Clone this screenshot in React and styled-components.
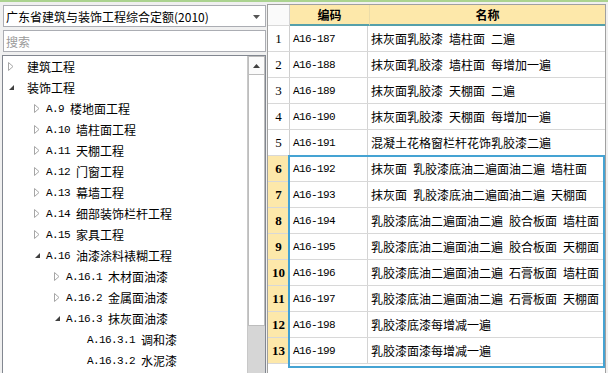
import React from 'react';
import styled, { createGlobalStyle } from 'styled-components';

const GlobalStyle = createGlobalStyle`
	html, body {
		margin: 0;
		padding: 0;
		background: #f0f0f0;
		overflow: hidden;
	}
	body {
		font-family: 'Noto Sans CJK SC', 'Noto Sans', sans-serif;
		font-size: 12px;
		color: #000;
	}
`;

const treeNodes = [
	{ level: 0, state: 'closed', label: '建筑工程' },
	{ level: 0, state: 'open', label: '装饰工程' },
	{ level: 1, state: 'closed', code: 'A.9', label: '楼地面工程' },
	{ level: 1, state: 'closed', code: 'A.10', label: '墙柱面工程' },
	{ level: 1, state: 'closed', code: 'A.11', label: '天棚工程' },
	{ level: 1, state: 'closed', code: 'A.12', label: '门窗工程' },
	{ level: 1, state: 'closed', code: 'A.13', label: '幕墙工程' },
	{ level: 1, state: 'closed', code: 'A.14', label: '细部装饰栏杆工程' },
	{ level: 1, state: 'closed', code: 'A.15', label: '家具工程' },
	{ level: 1, state: 'open', code: 'A.16', label: '油漆涂料裱糊工程' },
	{ level: 2, state: 'closed', code: 'A.16.1', label: '木材面油漆' },
	{ level: 2, state: 'closed', code: 'A.16.2', label: '金属面油漆' },
	{ level: 2, state: 'open', code: 'A.16.3', label: '抹灰面油漆' },
	{ level: 3, state: 'leaf', code: 'A.16.3.1', label: '调和漆' },
	{ level: 3, state: 'leaf', code: 'A.16.3.2', label: '水泥漆' },
];

const rows = [
	['A16-187', '抹灰面乳胶漆 墙柱面 二遍'],
	['A16-188', '抹灰面乳胶漆 墙柱面 每增加一遍'],
	['A16-189', '抹灰面乳胶漆 天棚面 二遍'],
	['A16-190', '抹灰面乳胶漆 天棚面 每增加一遍'],
	['A16-191', '混凝土花格窗栏杆花饰乳胶漆二遍'],
	['A16-192', '抹灰面 乳胶漆底油二遍面油二遍 墙柱面'],
	['A16-193', '抹灰面 乳胶漆底油二遍面油二遍 天棚面'],
	['A16-194', '乳胶漆底油二遍面油二遍 胶合板面 墙柱面'],
	['A16-195', '乳胶漆底油二遍面油二遍 胶合板面 天棚面'],
	['A16-196', '乳胶漆底油二遍面油二遍 石膏板面 墙柱面'],
	['A16-197', '乳胶漆底油二遍面油二遍 石膏板面 天棚面'],
	['A16-198', '乳胶漆底漆每增减一遍'],
	['A16-199', '乳胶漆面漆每增减一遍'],
];

// rows 6..13 are the current selection
const SEL_START = 5;
const ROW_H = 26;

const toggleX = [7, 33, 53, 0];
const textX = [26, 45, 65, 86];

const Toggle = ({ state }) => {
	if (state === 'open') {
		return (
			<svg width='7' height='7' viewBox='0 0 7 7'>
				<path d='M6 1 L6 6 L1 6 Z' fill='#404040' />
			</svg>
		);
	}
	return (
		<svg width='6' height='9' viewBox='0 0 6 9'>
			<path d='M0.5 0.5 L5 4.5 L0.5 8.5 Z' fill='#fff' stroke='#a6a6a6' strokeWidth='1' />
		</svg>
	);
};

const App = () => {
	return (
		<>
			<GlobalStyle />
			<TopLine />
			<Main>
				<LeftPanel>
					<Select>
						<SelectText>广东省建筑与装饰工程综合定额(2010)</SelectText>
						<SelectArrow>
							<svg width='7' height='4' viewBox='0 0 7 4'>
								<path d='M0 0 L7 0 L3.5 4 Z' fill='#555' />
							</svg>
						</SelectArrow>
					</Select>
					<Search placeholder='搜索' />
					<TreeBox>
						<TreeList>
							{treeNodes.map((n, i) => (
								<TreeRow key={i} $indent={n.state === 'leaf' ? textX[n.level] : toggleX[n.level]}>
									{n.state !== 'leaf' && (
										<ToggleBox $w={textX[n.level] - toggleX[n.level]}>
											<Toggle state={n.state} />
										</ToggleBox>
									)}
									{n.code && <Code>{n.code}</Code>}
									<span>{n.label}</span>
								</TreeRow>
							))}
						</TreeList>
						<ScrollBar>
							<ScrollButton>
								<svg width='7' height='4' viewBox='0 0 7 4'>
									<path d='M3.5 0 L7 4 L0 4 Z' fill='#404040' />
								</svg>
							</ScrollButton>
							<ScrollThumb />
						</ScrollBar>
					</TreeBox>
				</LeftPanel>
				<GridPanel>
					<HeadRow>
						<Corner />
						<HeadCell $w={79}>编码</HeadCell>
						<HeadCell>名称</HeadCell>
					</HeadRow>
					<Body>
						{rows.map(([code, name], i) => (
							<Row key={code}>
								<NumCell $sel={i >= SEL_START}>{i + 1}</NumCell>
								<CodeCell>{code}</CodeCell>
								<NameCell>{name}</NameCell>
							</Row>
						))}
						<Selection
							style={{
								top: `${SEL_START * ROW_H - 1}px`,
								height: `${(rows.length - SEL_START) * ROW_H + 1}px`,
							}}
						/>
					</Body>
				</GridPanel>
			</Main>
		</>
	);
};

export default App;

const TopLine = styled.div`
	height: 2px;
	background: #abd390;
`;

const Main = styled.div`
	display: flex;
	height: 371px;
`;

const LeftPanel = styled.div`
	width: 266px;
	flex-shrink: 0;
	display: flex;
	flex-direction: column;
	padding: 3px 0 0 2px;
	box-sizing: border-box;
	gap: 3px;
`;

const Select = styled.div`
	height: 22px;
	margin-left: 1px;
	border: 1px solid #abadb3;
	background: #fff;
	display: flex;
	align-items: center;
	box-sizing: border-box;
`;

const SelectText = styled.div`
	flex: 1;
	padding-left: 2px;
	font-size: 12px;
	white-space: nowrap;
`;

const SelectArrow = styled.div`
	width: 18px;
	display: flex;
	justify-content: center;
	padding-top: 1px;
`;

const Search = styled.input`
	height: 22px;
	margin: 0 0 0 1px;
	border: 1px solid #abadb3;
	background: #fff;
	box-sizing: border-box;
	padding: 0 2px;
	font-family: 'Noto Sans CJK SC', sans-serif;
	font-size: 12px;
	outline: none;
	&::placeholder {
		color: #9a9a9a;
	}
`;

const TreeBox = styled.div`
	flex: 1;
	border: 1px solid #828790;
	border-bottom: none;
	background: #fff;
	display: flex;
	min-height: 0;
`;

const TreeList = styled.div`
	flex: 1;
	overflow: hidden;
`;

const TreeRow = styled.div`
	height: 21px;
	display: flex;
	align-items: center;
	padding-left: ${(p) => p.$indent - 2}px;
	white-space: nowrap;
	font-size: 12px;
`;

const ToggleBox = styled.div`
	width: ${(p) => p.$w}px;
	flex-shrink: 0;
	display: flex;
	align-items: center;
`;

const Code = styled.span`
	font-family: 'Liberation Mono', monospace;
	font-size: 11px;
	letter-spacing: -0.6px;
	margin-right: 6px;
`;

const ScrollBar = styled.div`
	width: 17px;
	display: flex;
	flex-direction: column;
	background: #d6d6d6;
	border-left: 1px solid #c8c8c8;
`;

const ScrollButton = styled.div`
	height: 19px;
	background: #fbfbfb;
	border: 1px solid #bdbdbd;
	box-sizing: border-box;
	display: flex;
	align-items: center;
	justify-content: center;
`;

const ScrollThumb = styled.div`
	height: 251px;
	background: #fff;
	border: 1px solid #bdbdbd;
	border-top: none;
	box-sizing: border-box;
`;

const GridPanel = styled.div`
	flex: 1;
	margin: 2px 2px 0 1px;
	background: #fff;
	border: 1px solid #a0a0a0;
	border-bottom: none;
`;

const HeadRow = styled.div`
	display: flex;
	height: 21px;
`;

const Corner = styled.div`
	width: 21px;
	background: #fafafa;
	border-right: 1px solid #d4d4d4;
	border-bottom: 1px solid #d8d8d8;
`;

const HeadCell = styled.div`
	${(p) => (p.$w ? `width: ${p.$w}px;` : 'flex: 1;')}
	background: #fde8aa;
	border-right: 1px solid #ecdca8;
	border-bottom: 2px solid #55a0aa;
	font-weight: bold;
	font-size: 12px;
	display: flex;
	align-items: center;
	justify-content: center;
	&:last-child {
		border-right: none;
	}
`;

const Body = styled.div`
	position: relative;
`;

const Row = styled.div`
	display: flex;
	height: ${ROW_H}px;
	border-bottom: 1px solid #d8d8d8;
	box-sizing: border-box;
`;

const NumCell = styled.div`
	width: 21px;
	border-right: 1px solid #cfcfcf;
	background: ${(p) => (p.$sel ? '#fde8aa' : '#fff')};
	font-family: 'Liberation Serif', serif;
	font-size: 13px;
	font-weight: ${(p) => (p.$sel ? 'bold' : 'normal')};
	display: flex;
	align-items: center;
	justify-content: center;
`;

const CodeCell = styled.div`
	width: 78px;
	border-right: 1px solid #d4d4d4;
	padding-left: 3px;
	box-sizing: border-box;
	font-family: 'Liberation Mono', monospace;
	font-size: 11px;
	letter-spacing: -0.6px;
	display: flex;
	align-items: center;
`;

const NameCell = styled.div`
	flex: 1;
	padding-left: 3px;
	font-size: 12px;
	word-spacing: 3.3px;
	white-space: nowrap;
	display: flex;
	align-items: center;
`;

const Selection = styled.div`
	position: absolute;
	left: 20px;
	right: 0;
	border: 2px solid #45a3d3;
	pointer-events: none;
`;
